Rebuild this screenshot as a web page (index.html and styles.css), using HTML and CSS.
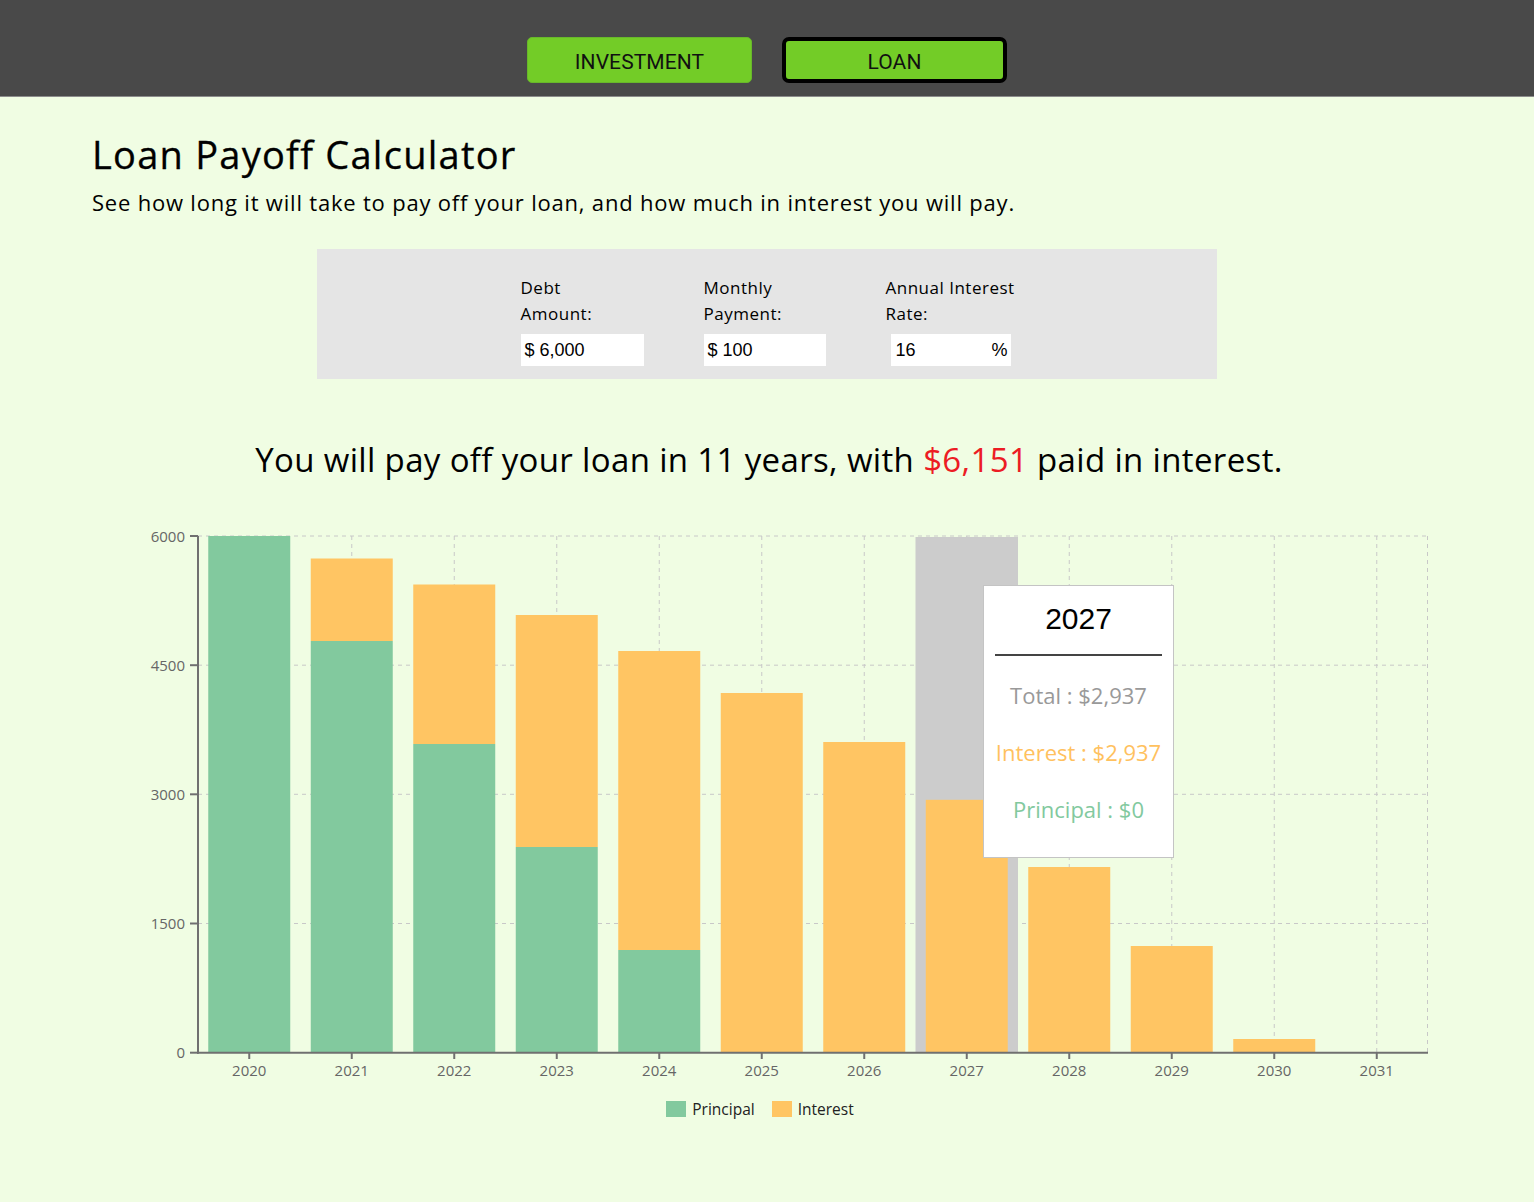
FILE: index.html
```html
<!DOCTYPE html>
<html lang="en">
<head>
<meta charset="utf-8">
<title>Loan Payoff Calculator</title>
<link rel="stylesheet" href="styles.css">
</head>
<body>
<header class="topbar">
  <nav class="tabs">
    <button class="tab">INVESTMENT</button>
    <button class="tab tab-active">LOAN</button>
  </nav>
</header>
<main class="page">
  <section class="intro">
    <h1 class="title">Loan Payoff Calculator</h1>
    <p class="subtitle">See how long it will take to pay off your loan, and how much in interest you will pay.</p>
  </section>

  <section class="panel">
    <div class="field field-debt">
      <label class="field-label">Debt<br>Amount:</label>
      <div class="input-box"><span class="input-text">$ 6,000</span></div>
    </div>
    <div class="field field-pay">
      <label class="field-label">Monthly<br>Payment:</label>
      <div class="input-box"><span class="input-text">$ 100</span></div>
    </div>
    <div class="field field-rate">
      <label class="field-label">Annual Interest<br>Rate:</label>
      <div class="input-box input-rate"><span class="input-text">16</span><span class="input-text">%</span></div>
    </div>
  </section>

  <h2 class="result">You will pay off your loan in 11 years, with <span class="amount">$6,151</span> paid in interest.</h2>

  <section class="chart">
    <svg class="chart-svg" width="1300" height="570" viewBox="0 0 1300 570">
      <g class="grid" stroke="#c8c8c8" stroke-dasharray="4 4" stroke-width="1" fill="none">
        <line x1="68" y1="16" x2="1298" y2="16"/>
        <line x1="68" y1="145.2" x2="1298" y2="145.2"/>
        <line x1="68" y1="274.3" x2="1298" y2="274.3"/>
        <line x1="68" y1="403.5" x2="1298" y2="403.5"/>
        <line x1="119.25" y1="16" x2="119.25" y2="532.7"/>
        <line x1="221.75" y1="16" x2="221.75" y2="532.7"/>
        <line x1="324.25" y1="16" x2="324.25" y2="532.7"/>
        <line x1="426.75" y1="16" x2="426.75" y2="532.7"/>
        <line x1="529.25" y1="16" x2="529.25" y2="532.7"/>
        <line x1="631.75" y1="16" x2="631.75" y2="532.7"/>
        <line x1="734.25" y1="16" x2="734.25" y2="532.7"/>
        <line x1="836.75" y1="16" x2="836.75" y2="532.7"/>
        <line x1="939.25" y1="16" x2="939.25" y2="532.7"/>
        <line x1="1041.75" y1="16" x2="1041.75" y2="532.7"/>
        <line x1="1144.25" y1="16" x2="1144.25" y2="532.7"/>
        <line x1="1246.75" y1="16" x2="1246.75" y2="532.7"/>
        <line x1="1297.5" y1="16" x2="1297.5" y2="532.7"/>
      </g>
      <rect class="cursor" x="785.5" y="17" width="102.5" height="515.7" fill="#cccccc"/>
      <g class="bars-principal" fill="#82c99e">
        <rect x="78.25" y="16" width="82" height="516.7"/>
        <rect x="180.75" y="121" width="82" height="411.7"/>
        <rect x="283.25" y="224" width="82" height="308.7"/>
        <rect x="385.75" y="327" width="82" height="205.7"/>
        <rect x="488.25" y="430" width="82" height="102.7"/>
      </g>
      <g class="bars-interest" fill="#ffc563">
        <rect x="180.75" y="38.5" width="82" height="82.5"/>
        <rect x="283.25" y="64.5" width="82" height="159.5"/>
        <rect x="385.75" y="95" width="82" height="232"/>
        <rect x="488.25" y="131" width="82" height="299"/>
        <rect x="590.75" y="173" width="82" height="359.7"/>
        <rect x="693.25" y="222" width="82" height="310.7"/>
        <rect x="795.75" y="279.8" width="82" height="252.9"/>
        <rect x="898.25" y="347" width="82" height="185.7"/>
        <rect x="1000.75" y="426" width="82" height="106.7"/>
        <rect x="1103.25" y="519" width="82" height="13.7"/>
      </g>
      <g class="axes" stroke="#707070" stroke-width="2" fill="none">
        <line x1="68" y1="16" x2="68" y2="533.7"/>
        <line x1="67" y1="532.7" x2="1298" y2="532.7"/>
        <line x1="60" y1="16" x2="68" y2="16"/>
        <line x1="60" y1="145.2" x2="68" y2="145.2"/>
        <line x1="60" y1="274.3" x2="68" y2="274.3"/>
        <line x1="60" y1="403.5" x2="68" y2="403.5"/>
        <line x1="60" y1="532.7" x2="68" y2="532.7"/>
        <line x1="119.25" y1="532.7" x2="119.25" y2="539"/>
        <line x1="221.75" y1="532.7" x2="221.75" y2="539"/>
        <line x1="324.25" y1="532.7" x2="324.25" y2="539"/>
        <line x1="426.75" y1="532.7" x2="426.75" y2="539"/>
        <line x1="529.25" y1="532.7" x2="529.25" y2="539"/>
        <line x1="631.75" y1="532.7" x2="631.75" y2="539"/>
        <line x1="734.25" y1="532.7" x2="734.25" y2="539"/>
        <line x1="836.75" y1="532.7" x2="836.75" y2="539"/>
        <line x1="939.25" y1="532.7" x2="939.25" y2="539"/>
        <line x1="1041.75" y1="532.7" x2="1041.75" y2="539"/>
        <line x1="1144.25" y1="532.7" x2="1144.25" y2="539"/>
        <line x1="1246.75" y1="532.7" x2="1246.75" y2="539"/>
      </g>
      <g class="ytick-labels" text-anchor="end">
        <text x="55" y="21.5">6000</text>
        <text x="55" y="150.7">4500</text>
        <text x="55" y="279.8">3000</text>
        <text x="55" y="409">1500</text>
        <text x="55" y="538.2">0</text>
      </g>
      <g class="xtick-labels" text-anchor="middle">
        <text x="119.25" y="556">2020</text>
        <text x="221.75" y="556">2021</text>
        <text x="324.25" y="556">2022</text>
        <text x="426.75" y="556">2023</text>
        <text x="529.25" y="556">2024</text>
        <text x="631.75" y="556">2025</text>
        <text x="734.25" y="556">2026</text>
        <text x="836.75" y="556">2027</text>
        <text x="939.25" y="556">2028</text>
        <text x="1041.75" y="556">2029</text>
        <text x="1144.25" y="556">2030</text>
        <text x="1246.75" y="556">2031</text>
      </g>
    </svg>

    <div class="tooltip">
      <div class="tooltip-year">2027</div>
      <div class="tooltip-rule"></div>
      <div class="tooltip-row tt-total">Total : $2,937</div>
      <div class="tooltip-row tt-interest">Interest : $2,937</div>
      <div class="tooltip-row tt-principal">Principal : $0</div>
    </div>
  </section>

  <ul class="legend">
    <li class="legend-item"><span class="swatch swatch-principal"></span>Principal</li>
    <li class="legend-item"><span class="swatch swatch-interest"></span>Interest</li>
  </ul>
</main>
</body>
</html>
```
FILE: styles.css
```css
* { box-sizing: border-box; }

html, body {
  margin: 0;
  padding: 0;
}

body {
  background: #f0fde3;
  font-family: "Open Sans", "Noto Sans", sans-serif;
  color: #000;
  min-height: 1202px;
}

.topbar {
  height: 97px;
  background: #494949;
  border-bottom: 1px solid #8c8c8c;
  padding-top: 37px;
}

.tabs {
  display: flex;
  justify-content: center;
  gap: 30px;
}

.tab {
  width: 225px;
  height: 46px;
  margin: 0;
  padding: 3px 0 0;
  border-radius: 5px;
  background: #73cc27;
  border: 1px solid #68b82a;
  font-family: Roboto, "Liberation Sans", sans-serif;
  font-size: 21px;
  color: #111;
  letter-spacing: 0.1px;
}

.tab-active {
  border: 4px solid #000;
  border-radius: 7px;
}

.page {
  padding-bottom: 40px;
}

.intro {
  padding-left: 92px;
}

.title {
  margin: 34px 0 0;
  font-size: 38px;
  line-height: 46px;
  font-weight: 500;
  letter-spacing: 1.25px;
  -webkit-text-stroke: 0.3px #000;
}

.subtitle {
  margin: 11px 0 0;
  font-size: 22px;
  line-height: 28px;
  letter-spacing: 0.8px;
}

.panel {
  width: 900px;
  height: 130px;
  margin: 33px auto 0;
  background: #e5e5e5;
  padding: 26px 0 0 4px;
  display: flex;
  justify-content: center;
  gap: 60px;
}

.field {
  display: flex;
  flex-direction: column;
}

.field-debt { width: 123px; }
.field-pay { width: 122px; }
.field-rate { width: 132px; }

.field-label {
  font-size: 17px;
  line-height: 25.5px;
  letter-spacing: 0.5px;
  white-space: nowrap;
}

.input-box {
  margin-top: 8px;
  height: 32px;
  background: #fff;
  display: flex;
  align-items: center;
  padding: 0 4px;
}

.input-rate {
  margin-left: 5px;
  width: 120px;
  justify-content: space-between;
  padding: 0 3px 0 5px;
}

.input-text {
  font-family: "Liberation Sans", Arial, sans-serif;
  font-size: 18px;
  color: #000;
}

.result {
  margin: 61px 0 0;
  padding-left: 4px;
  text-align: center;
  font-size: 33px;
  line-height: 40px;
  font-weight: 400;
  letter-spacing: 0.35px;
}

.amount {
  color: #ec1c24;
}

.chart {
  position: relative;
  width: 1300px;
  margin: 40px 0 0 130px;
}

.chart-svg {
  display: block;
  font-family: "Open Sans", sans-serif;
  font-size: 15px;
}

.chart-svg text {
  fill: #666;
}

.tooltip {
  position: absolute;
  left: 853px;
  top: 65px;
  width: 191px;
  height: 273px;
  background: #fff;
  border: 1px solid #c4c4c4;
  padding: 13px 11px 0;
  text-align: center;
}

.tooltip-year {
  font-family: "Liberation Sans", Arial, sans-serif;
  font-size: 30px;
  line-height: 40px;
  color: #000;
}

.tooltip-rule {
  height: 2px;
  background: #444;
  margin-top: 15px;
}

.tooltip-row {
  font-size: 22px;
  line-height: 57px;
}

.tooltip-row.tt-total { margin-top: 11px; color: #999; }
.tt-interest { color: #ffc15e; }
.tt-principal { color: #82c99e; }

.legend {
  list-style: none;
  margin: 9px 0 0;
  padding: 0 14px 0 0;
  display: flex;
  justify-content: center;
  gap: 17px;
}

.legend-item {
  display: flex;
  align-items: center;
  gap: 6px;
  font-size: 15.5px;
  line-height: 20px;
  color: #222;
}

.swatch {
  display: inline-block;
  width: 20px;
  height: 16px;
}

.swatch-principal { background: #82c99e; }
.swatch-interest { background: #ffc563; }
```
